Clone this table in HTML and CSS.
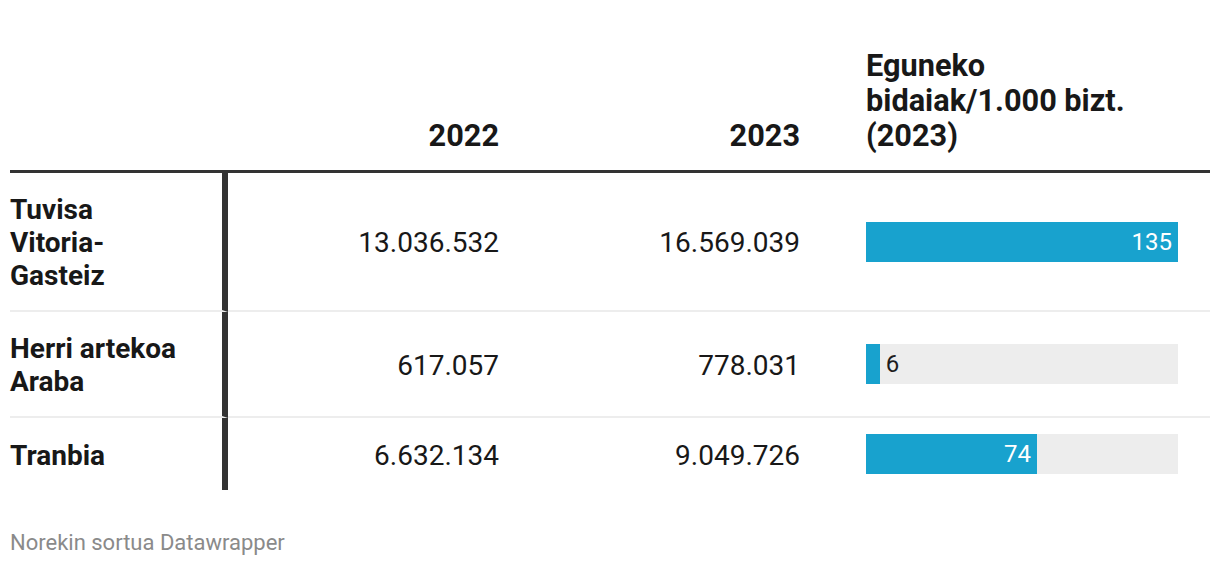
FILE: index.html
```html
<!DOCTYPE html>
<html lang="eu">
<head>
<meta charset="utf-8">
<title>Garraio publikoa</title>
<link rel="stylesheet" href="styles.css">
</head>
<body>
<div class="chart">
  <div class="table">
    <div class="th th-label"></div>
    <div class="th th-num">2022</div>
    <div class="th th-num">2023</div>
    <div class="th th-bar"><span class="ln">Eguneko</span><span class="ln">bidaiak/1.000 bizt.</span><span class="ln">(2023)</span></div>

    <div class="td td-label">Tuvisa Vitoria-Gasteiz</div>
    <div class="td td-num">13.036.532</div>
    <div class="td td-num">16.569.039</div>
    <div class="td td-bar">
      <div class="bar-track"><div class="bar-fill" style="width:100%"><span class="bar-val inside">135</span></div></div>
    </div>

    <div class="td td-label">Herri artekoa Araba</div>
    <div class="td td-num">617.057</div>
    <div class="td td-num">778.031</div>
    <div class="td td-bar">
      <div class="bar-track"><div class="bar-fill" style="width:4.44%"></div><span class="bar-val outside">6</span></div>
    </div>

    <div class="td td-label last">Tranbia</div>
    <div class="td td-num last">6.632.134</div>
    <div class="td td-num last">9.049.726</div>
    <div class="td td-bar last">
      <div class="bar-track"><div class="bar-fill" style="width:54.8%"><span class="bar-val inside">74</span></div></div>
    </div>
  </div>
  <div class="footer">Norekin sortua Datawrapper</div>
</div>
</body>
</html>
```
FILE: styles.css
```css
html, body {
  margin: 0;
  padding: 0;
  background: #ffffff;
}

body {
  font-family: Roboto, "Liberation Sans", Arial, sans-serif;
  color: #181818;
}

.chart {
  padding: 48px 10px 0 10px;
}

.table {
  display: grid;
  grid-template-columns: 218px 287px 301px 394px;
  width: 1200px;
}

.th {
  font-size: 30.7px;
  font-weight: 700;
  line-height: 35px;
  padding-bottom: 17px;
  border-bottom: 3px solid #333333;
  display: flex;
  flex-direction: column;
  justify-content: flex-end;
}

.th-num {
  text-align: right;
  padding-right: 16px;
}

.th-bar {
  padding-left: 50px;
  padding-right: 32px;
}

.ln {
  display: block;
  white-space: nowrap;
}

.td {
  font-size: 28px;
  line-height: 33px;
  padding-top: 20px;
  padding-bottom: 18px;
  border-bottom: 2px solid #ededed;
  display: flex;
  align-items: center;
}

.td.last {
  border-bottom: none;
}

.td-label {
  font-weight: 700;
  border-right: 6px solid #333333;
  padding-right: 30px;
}

.td-num {
  justify-content: flex-end;
  padding-right: 16px;
  font-weight: 400;
}

.td-bar {
  padding: 16px 32px 16px 50px;
}

.bar-track {
  position: relative;
  width: 100%;
  height: 40px;
  background: #ededed;
  display: flex;
  align-items: center;
}

.bar-fill {
  height: 40px;
  background: #18a2ce;
  display: flex;
  align-items: center;
  justify-content: flex-end;
}

.bar-val {
  font-size: 24px;
  line-height: 28px;
}

.bar-val.inside {
  color: #ffffff;
  padding-right: 6px;
}

.bar-val.outside {
  color: #1d1d1d;
  padding-left: 6px;
}

.footer {
  margin-top: 40px;
  font-size: 22px;
  line-height: 26px;
  color: #8a8a8a;
}
```
